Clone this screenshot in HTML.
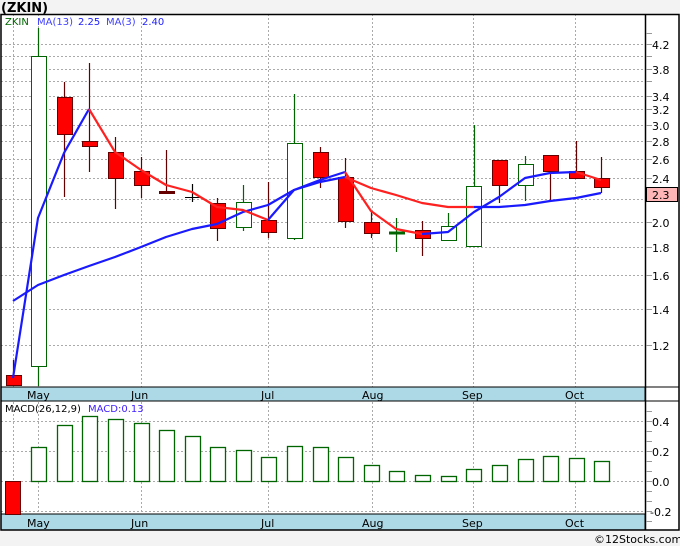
<!DOCTYPE html>
<html><head><meta charset="utf-8"><style>
html,body{margin:0;padding:0;background:#f3f3f3;}
svg{display:block;font-family:"DejaVu Sans","Liberation Sans",sans-serif;}
</style></head><body>
<svg width="680" height="546" viewBox="0 0 680 546" xmlns="http://www.w3.org/2000/svg">
<rect x="0" y="0" width="680" height="546" fill="#f3f3f3"/>
<text x="1" y="12" font-size="13" font-weight="bold" fill="#000">(ZKIN)</text>
<rect x="1" y="14" width="678" height="516" fill="#fff"/>
<g stroke="#aaa" stroke-width="1" stroke-dasharray="2,2">
<line x1="1" y1="44.5" x2="645" y2="44.5"/><line x1="1" y1="56.5" x2="645" y2="56.5"/><line x1="1" y1="69.5" x2="645" y2="69.5"/><line x1="1" y1="81.5" x2="645" y2="81.5"/><line x1="1" y1="96.5" x2="645" y2="96.5"/><line x1="1" y1="109.5" x2="645" y2="109.5"/><line x1="1" y1="125.5" x2="645" y2="125.5"/><line x1="1" y1="141.5" x2="645" y2="141.5"/><line x1="1" y1="159.5" x2="645" y2="159.5"/><line x1="1" y1="178.5" x2="645" y2="178.5"/><line x1="1" y1="199.5" x2="645" y2="199.5"/><line x1="1" y1="222.5" x2="645" y2="222.5"/><line x1="1" y1="247.5" x2="645" y2="247.5"/><line x1="1" y1="275.5" x2="645" y2="275.5"/><line x1="1" y1="309.5" x2="645" y2="309.5"/><line x1="1" y1="345.5" x2="645" y2="345.5"/>
<line x1="1" y1="421.5" x2="645" y2="421.5"/><line x1="1" y1="451.5" x2="645" y2="451.5"/><line x1="1" y1="481.5" x2="645" y2="481.5"/><line x1="1" y1="511.5" x2="645" y2="511.5"/>
<line x1="13.5" y1="14" x2="13.5" y2="530"/><line x1="38.5" y1="14" x2="38.5" y2="530"/><line x1="141.5" y1="14" x2="141.5" y2="530"/><line x1="268.5" y1="14" x2="268.5" y2="530"/><line x1="372.5" y1="14" x2="372.5" y2="530"/><line x1="473.5" y1="14" x2="473.5" y2="530"/><line x1="575.5" y1="14" x2="575.5" y2="530"/>
</g>
<text x="5" y="25" font-size="10" fill="#006400">ZKIN</text>
<text x="37" y="25" font-size="10" fill="#4040ff">MA(13)</text>
<text x="78" y="25" font-size="10" fill="#2020ff">2.25</text>
<text x="106" y="25" font-size="10" fill="#4040ff">MA(3)</text>
<text x="142" y="25" font-size="10" fill="#2020ff">2.40</text>
<g stroke-width="1.2">
<line x1="13.5" y1="360" x2="13.5" y2="385" stroke="#600"/>
<line x1="38.5" y1="28" x2="38.5" y2="386" stroke="#006400"/>
<line x1="64.5" y1="82" x2="64.5" y2="197" stroke="#600"/>
<line x1="89.5" y1="63" x2="89.5" y2="172" stroke="#600"/>
<line x1="115.5" y1="137" x2="115.5" y2="209" stroke="#600"/>
<line x1="141.5" y1="157" x2="141.5" y2="198" stroke="#600"/>
<line x1="166.5" y1="150" x2="166.5" y2="193" stroke="#600"/>
<line x1="192.5" y1="184" x2="192.5" y2="202" stroke="#000"/>
<line x1="217.5" y1="198" x2="217.5" y2="241" stroke="#600"/>
<line x1="243.5" y1="185" x2="243.5" y2="231" stroke="#006400"/>
<line x1="268.5" y1="182" x2="268.5" y2="238" stroke="#600"/>
<line x1="294.5" y1="94" x2="294.5" y2="240" stroke="#006400"/>
<line x1="320.5" y1="147" x2="320.5" y2="188" stroke="#600"/>
<line x1="345.5" y1="158" x2="345.5" y2="228" stroke="#600"/>
<line x1="371.5" y1="212" x2="371.5" y2="238" stroke="#600"/>
<line x1="396.5" y1="218" x2="396.5" y2="252" stroke="#006400"/>
<line x1="422.5" y1="221" x2="422.5" y2="256" stroke="#600"/>
<line x1="448.5" y1="213" x2="448.5" y2="240" stroke="#006400"/>
<line x1="474.5" y1="125" x2="474.5" y2="246" stroke="#006400"/>
<line x1="499.5" y1="160" x2="499.5" y2="203" stroke="#600"/>
<line x1="525.5" y1="156" x2="525.5" y2="201" stroke="#006400"/>
<line x1="550.5" y1="155" x2="550.5" y2="200" stroke="#600"/>
<line x1="576.5" y1="141" x2="576.5" y2="178" stroke="#600"/>
<line x1="601.5" y1="157" x2="601.5" y2="193" stroke="#600"/>
</g>
<g stroke-width="1">
<rect x="6.5" y="375.5" width="15" height="10" fill="#f00" stroke="#600"/>
<rect x="31.5" y="56.5" width="15" height="310" fill="#fff" stroke="#006400"/>
<rect x="57.5" y="97.5" width="15" height="37" fill="#f00" stroke="#600"/>
<rect x="82.5" y="141.5" width="15" height="5" fill="#f00" stroke="#600"/>
<rect x="108.5" y="152.5" width="15" height="26" fill="#f00" stroke="#600"/>
<rect x="134.5" y="171.5" width="15" height="14" fill="#f00" stroke="#600"/>
<rect x="159.5" y="191.5" width="15" height="2" fill="#600" stroke="#600"/>
<line x1="185" y1="197.5" x2="200" y2="197.5" stroke="#000"/>
<rect x="210.5" y="203.5" width="15" height="25" fill="#f00" stroke="#600"/>
<rect x="236.5" y="202.5" width="15" height="25" fill="#fff" stroke="#006400"/>
<rect x="261.5" y="220.5" width="15" height="12" fill="#f00" stroke="#600"/>
<rect x="287.5" y="143.5" width="15" height="95" fill="#fff" stroke="#006400"/>
<rect x="313.5" y="152.5" width="15" height="25" fill="#f00" stroke="#600"/>
<rect x="338.5" y="177.5" width="15" height="44" fill="#f00" stroke="#600"/>
<rect x="364.5" y="222.5" width="15" height="11" fill="#f00" stroke="#600"/>
<rect x="389.5" y="232" width="15" height="2" fill="#006400" stroke="#006400"/>
<rect x="415.5" y="230.5" width="15" height="8" fill="#f00" stroke="#600"/>
<rect x="441.5" y="226.5" width="15" height="14" fill="#fff" stroke="#006400"/>
<rect x="466.5" y="186.5" width="15" height="60" fill="#fff" stroke="#006400"/>
<rect x="492.5" y="160.5" width="15" height="25" fill="#f00" stroke="#600"/>
<rect x="518.5" y="164.5" width="15" height="21" fill="#fff" stroke="#006400"/>
<rect x="543.5" y="155.5" width="15" height="16" fill="#f00" stroke="#600"/>
<rect x="569.5" y="171.5" width="15" height="7" fill="#f00" stroke="#600"/>
<rect x="594.5" y="178.5" width="15" height="9" fill="#f00" stroke="#600"/>
</g>
<g fill="none" stroke-width="2.2" stroke-linejoin="round">
<polyline stroke="#1a1aff" points="13,301 38,285 64,275 89,266 115,257 141,247 166,237 192,229 217,224 243,212 268,205 294,190 320,182 345,177"/>
<polyline stroke="#ff2020" points="345,177 371,188 396,195 422,203 448,207 474,207"/>
<polyline stroke="#1a1aff" points="474,207 499,207 525,205 550,201 576,198 601,193"/>
<polyline stroke="#1a1aff" points="13,378 38,218 64,153 89,109"/>
<polyline stroke="#ff2020" points="89,109 115,152 141,170 166,185 192,192 217,207 243,210 268,220"/>
<polyline stroke="#1a1aff" points="268,220 294,190 320,180 345,172"/>
<polyline stroke="#ff2020" points="345,172 371,211 396,229 422,234"/>
<polyline stroke="#1a1aff" points="422,234 448,232 474,212 499,197 525,178 550,173 576,172"/>
<polyline stroke="#ff2020" points="576,172 601,180"/>
</g>
<rect x="1" y="387" width="644" height="14" fill="#add8e6" stroke="#000" stroke-width="1"/>
<rect x="1" y="514" width="644" height="16" fill="#add8e6" stroke="#000" stroke-width="1"/>
<g font-size="11" fill="#000">
<text x="27" y="399">May</text><text x="131" y="399">Jun</text><text x="261" y="399">Jul</text><text x="362" y="399">Aug</text><text x="462" y="399">Sep</text><text x="565" y="399">Oct</text>
<text x="27" y="527">May</text><text x="131" y="527">Jun</text><text x="261" y="527">Jul</text><text x="362" y="527">Aug</text><text x="462" y="527">Sep</text><text x="565" y="527">Oct</text>
</g>
<text x="5" y="412" font-size="10" fill="#000">MACD(26,12,9)</text>
<text x="88" y="412" font-size="10" fill="#4020ff">MACD:0.13</text>
<g fill="#fff" stroke="#006400" stroke-width="1.3">
<rect x="31.5" y="447.5" width="15" height="34"/>
<rect x="57.5" y="425.5" width="15" height="56"/>
<rect x="82.5" y="416.5" width="15" height="65"/>
<rect x="108.5" y="419.5" width="15" height="62"/>
<rect x="134.5" y="423.5" width="15" height="58"/>
<rect x="159.5" y="430.5" width="15" height="51"/>
<rect x="185.5" y="436.5" width="15" height="45"/>
<rect x="210.5" y="447.5" width="15" height="34"/>
<rect x="236.5" y="450.5" width="15" height="31"/>
<rect x="261.5" y="457.5" width="15" height="24"/>
<rect x="287.5" y="446.5" width="15" height="35"/>
<rect x="313.5" y="447.5" width="15" height="34"/>
<rect x="338.5" y="457.5" width="15" height="24"/>
<rect x="364.5" y="465.5" width="15" height="16"/>
<rect x="389.5" y="471.5" width="15" height="10"/>
<rect x="415.5" y="475.5" width="15" height="6"/>
<rect x="441.5" y="476.5" width="15" height="5"/>
<rect x="466.5" y="469.5" width="15" height="12"/>
<rect x="492.5" y="465.5" width="15" height="16"/>
<rect x="518.5" y="459.5" width="15" height="22"/>
<rect x="543.5" y="456.5" width="15" height="25"/>
<rect x="569.5" y="458.5" width="15" height="23"/>
<rect x="594.5" y="461.5" width="15" height="20"/>
</g>
<rect x="5.5" y="481.5" width="15" height="33" fill="#f00" stroke="#600"/>
<rect x="1" y="14.5" width="678" height="515.5" fill="none" stroke="#000" stroke-width="1.5"/>
<line x1="645.5" y1="14" x2="645.5" y2="530" stroke="#000" stroke-width="1.5"/>
<line x1="1" y1="387" x2="679" y2="387" stroke="#000" stroke-width="1"/>
<line x1="645" y1="401" x2="679" y2="401" stroke="#000" stroke-width="1"/>
<g stroke="#999" stroke-width="1">
<line x1="646" y1="33.5" x2="652" y2="33.5"/><line x1="646" y1="44.5" x2="652" y2="44.5"/><line x1="646" y1="56.5" x2="652" y2="56.5"/><line x1="646" y1="69.5" x2="652" y2="69.5"/><line x1="646" y1="81.5" x2="652" y2="81.5"/><line x1="646" y1="96.5" x2="652" y2="96.5"/><line x1="646" y1="109.5" x2="652" y2="109.5"/><line x1="646" y1="125.5" x2="652" y2="125.5"/><line x1="646" y1="141.5" x2="652" y2="141.5"/><line x1="646" y1="159.5" x2="652" y2="159.5"/><line x1="646" y1="178.5" x2="652" y2="178.5"/><line x1="646" y1="199.5" x2="652" y2="199.5"/><line x1="646" y1="222.5" x2="652" y2="222.5"/><line x1="646" y1="247.5" x2="652" y2="247.5"/><line x1="646" y1="275.5" x2="652" y2="275.5"/><line x1="646" y1="309.5" x2="652" y2="309.5"/><line x1="646" y1="345.5" x2="652" y2="345.5"/>
<line x1="646" y1="411.5" x2="652" y2="411.5"/><line x1="646" y1="421.5" x2="652" y2="421.5"/><line x1="646" y1="431.5" x2="652" y2="431.5"/><line x1="646" y1="441.5" x2="652" y2="441.5"/><line x1="646" y1="451.5" x2="652" y2="451.5"/><line x1="646" y1="461.5" x2="652" y2="461.5"/><line x1="646" y1="471.5" x2="652" y2="471.5"/><line x1="646" y1="481.5" x2="652" y2="481.5"/><line x1="646" y1="491.5" x2="652" y2="491.5"/><line x1="646" y1="501.5" x2="652" y2="501.5"/><line x1="646" y1="511.5" x2="652" y2="511.5"/><line x1="646" y1="521.5" x2="652" y2="521.5"/>
</g>
<g font-size="11" fill="#000">
<text x="652" y="49">4.2</text><text x="652" y="74">3.8</text><text x="652" y="101">3.4</text><text x="652" y="114">3.2</text><text x="652" y="130">3.0</text><text x="652" y="146">2.8</text><text x="652" y="164">2.6</text><text x="652" y="183">2.4</text><text x="652" y="227">2.0</text><text x="652" y="252">1.8</text><text x="652" y="280">1.6</text><text x="652" y="314">1.4</text><text x="652" y="350">1.2</text>
<text x="652" y="426">0.4</text><text x="652" y="456">0.2</text><text x="652" y="486">0.0</text><text x="650" y="516">-0.2</text>
</g>
<rect x="646.5" y="187.5" width="31" height="14" fill="#ffb6b6" stroke="#000"/>
<text x="652" y="199" font-size="11" fill="#000">2.3</text>
<text x="594" y="543" font-size="11" fill="#000">©12Stocks.com</text>
</svg>
</body></html>
